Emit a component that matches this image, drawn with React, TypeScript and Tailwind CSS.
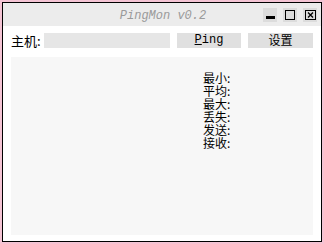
export default function App() {
  const labels = ["最小:", "平均:", "最大:", "丢失:", "发送:", "接收:"];
  return (
    <div
      className="w-[324px] h-[244px] bg-[#f4c4d4] p-[2px]"
      style={{ fontFamily: '"Noto Sans CJK SC", "DejaVu Sans", sans-serif' }}
    >
      <div className="w-full h-full border border-black bg-white flex flex-col">
        <div className="h-[23px] bg-[#ececec] flex items-center relative">
          <div
            className="flex-1 text-center pl-[60px] pt-[2px] text-[12px] italic text-[#9a9a9a]"
            style={{ fontFamily: '"Liberation Mono", monospace' }}
          >
            PingMon v0.2
          </div>
          <div className="flex items-center gap-[6px] pr-[4px]">
            <div className="w-[14px] h-[14px] bg-[#dcdcdc] flex items-end justify-center pb-[3px]">
              <div className="w-[9px] h-[3px] bg-black" />
            </div>
            <div className="w-[14px] h-[14px] bg-[#dcdcdc] flex items-center justify-center">
              <div className="w-[10px] h-[10px] border border-black" />
            </div>
            <div className="w-[14px] h-[14px] bg-[#dcdcdc] flex items-center justify-center">
              <svg width="11" height="10" viewBox="0 0 11 10">
                <rect x="0.5" y="0.5" width="10" height="9" fill="none" stroke="#000" />
                <path d="M3 2.5 L8 7.5 M8 2.5 L3 7.5" stroke="#000" strokeWidth="1.3" />
              </svg>
            </div>
          </div>
        </div>
        <div className="flex items-center h-[28px] pl-[8px] pr-[7px] text-[13px] text-black">
          <span className="w-[33px] leading-none">主机:</span>
          <div className="w-[126px] h-[15px] bg-[#e6e6e6]" />
          <div className="ml-[7px] w-[64px] h-[15px] bg-[#e0e0e0] flex items-center justify-center text-[12px]" style={{ fontFamily: '"Liberation Mono", monospace' }}>
            <span><span className="underline">P</span>ing</span>
          </div>
          <div className="ml-[7px] w-[65px] h-[15px] bg-[#e0e0e0] flex items-center justify-center text-[12px]">
            设置
          </div>
        </div>
        <div className="flex-1 mx-[8px] mt-[3px] mb-[6px] bg-[#f7f7f7] pt-[14px] pl-[192px]">
          {labels.map((l) => (
            <div key={l} className="text-[12px] leading-[13px] h-[13px] overflow-visible text-black">
              {l}
            </div>
          ))}
        </div>
      </div>
    </div>
  );
}
